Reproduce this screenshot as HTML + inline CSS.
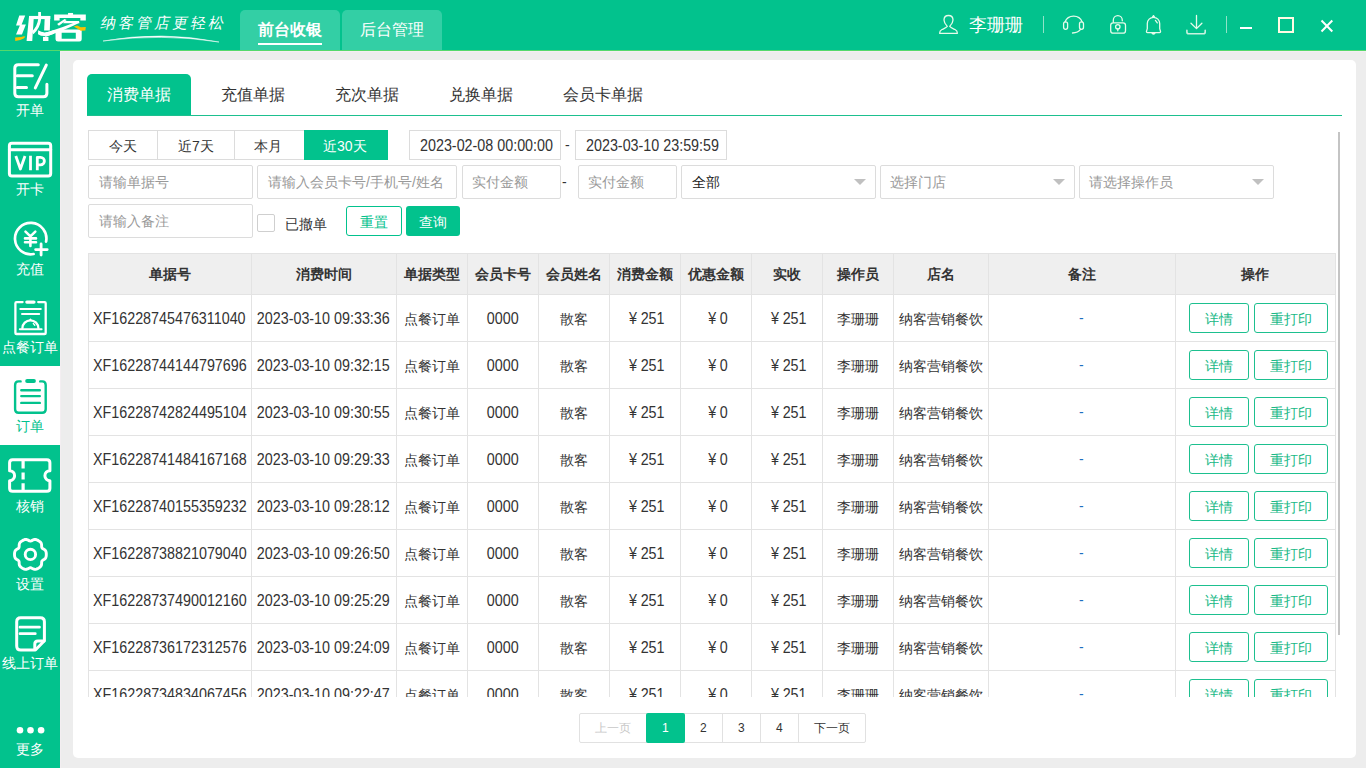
<!DOCTYPE html><html><head><meta charset="utf-8"><style>
*{box-sizing:border-box;margin:0;padding:0}
html,body{width:1366px;height:768px;overflow:hidden}
body{position:relative;background:#EDEDED;font-family:"Liberation Sans",sans-serif;color:#333;font-size:14px}
.a{position:absolute}
.t{position:absolute;white-space:nowrap;line-height:1}
.n{display:inline-block;font-size:16px;transform:scaleX(0.895);position:relative;top:-1px}
.nl{display:inline-block;font-size:16px;transform:scaleX(0.895);transform-origin:0 50%}
</style></head><body><div class="a" style="left:0;top:0;width:1366px;height:50px;background:#02C28D"></div><div class="a" style="left:0;top:50px;width:1366px;height:1px;background:#55D96C"></div><div class="a" style="left:60px;top:51px;width:1306px;height:1px;background:#F5EEF2"></div><div class="a" style="left:60px;top:51px;width:1px;height:717px;background:#F3EEF1"></div><div class="a" style="left:240px;top:10px;width:100px;height:40px;background:#33CFA5;border-radius:5px 5px 0 0"></div><div class="a" style="left:342px;top:10px;width:100px;height:40px;background:#33CFA5;border-radius:5px 5px 0 0"></div><div class="t" style="left:258px;top:22px;font-size:16px;color:#fff;font-weight:bold">前台收银</div><div class="a" style="left:258px;top:43px;width:64px;height:2px;background:#fff"></div><div class="t" style="left:360px;top:22px;font-size:16px;color:#fff">后台管理</div><svg class="a" style="left:0;top:0" width="95" height="50"><g fill="#fff" fill-rule="evenodd"><path d="M 19.29 15.47 L 25.21 15.47 L 21.66 24.49 L 25.90 24.49 L 21.93 34.60 L 16.01 34.60 L 19.84 25.40 L 16.01 25.40 Z"/><path d="M 29.08 15.92 L 33.87 15.92 L 32.27 40.98 L 26.58 40.98 Z"/><path d="M 29.08 15.92 L 50.27 15.92 L 50.27 19.11 L 29.08 19.11 Z"/><path d="M 38.20 12.05 L 40.93 12.05 L 41.16 19.11 L 38.20 19.11 Z"/><path d="M 38.20 18.88 L 41.16 18.88 Q 40.47 27.31 33.41 34.37 L 31.82 31.41 Q 37.51 25.95 38.20 18.88 Z"/><path d="M 44.80 15.92 L 50.27 15.92 L 49.81 30.50 L 44.12 30.50 Z"/><path d="M 38.20 30.27 Q 43.89 34.60 53.91 30.05 L 53.91 33.69 Q 43.89 38.25 37.97 34.15 Z"/><path d="M 42.98 36.88 L 48.45 36.88 L 48.45 40.98 L 42.98 40.98 Z"/><path d="M 68.05 12.96 L 73.06 12.96 L 73.06 15.01 L 68.05 15.01 Z"/><path d="M 54.15 14.56 L 85.81 14.56 L 85.81 20.48 L 80.35 20.48 L 80.35 17.97 L 59.62 17.97 L 59.62 20.48 L 54.15 20.48 Z"/><path d="M 57.11 24.12 L 64.63 18.88 L 66.68 20.02 L 58.93 25.72 Z"/><path d="M 64.63 20.93 L 78.98 20.93 L 79.44 23.21 L 63.03 23.21 Z"/><path d="M 76.70 21.62 L 79.44 22.76 Q 66.22 29.59 45.27 36.88 L 45.27 32.78 Q 63.95 27.31 76.70 21.62 Z"/><path d="M 55.52 31.87 L 61.67 29.59 L 81.71 29.59 L 81.71 39.16 Q 81.71 41.44 79.44 41.44 L 58.02 41.44 Q 55.52 41.44 55.52 39.16 Z M 61.67 32.78 L 75.79 32.78 L 75.79 38.70 L 61.67 38.70 Z"/></g><path fill="#FBC000" d="M 15.10 37.56 L 21.11 36.88 Q 24.98 35.88 25.44 36.79 Q 24.53 38.47 20.20 40.07 L 15.28 41.07 Z M 73.74 26.40 L 77.16 25.49 L 80.80 27.31 L 85.81 27.08 L 85.36 30.50 L 80.80 30.73 L 77.16 28.45 Z"/></svg><div class="t" style="left:101px;top:15px;font-size:15px;color:#fff;font-weight:300;letter-spacing:3px;transform:skewX(-12deg)">纳客管店更轻松</div><svg class="a" style="left:0;top:0" width="240" height="50"><path d="M103,41 Q162,30.5 219,42 Q162,33.2 103,41 Z" fill="#fff" stroke="#fff" stroke-width="0.5"/></svg><div class="t" style="left:969px;top:16px;font-size:18px;color:#fff;font-weight:500">李珊珊</div><svg class="a" style="left:0;top:0" width="1366" height="50"><path stroke="#E6FBEA" stroke-width="1.3" fill="none" stroke-linecap="round" stroke-linejoin="round" d="M947.3,26.4 C945,24 944,22 944,20 C944,17 946,15.5 948.5,15.5 C951,15.5 953,17 953,20 C953,22 952,24 949.7,26.4 C951,28 953,28.5 955,29.5 C957,30.5 957.4,32 957.4,33.3 H939.6 C939.6,32 940,30.5 942,29.5 C944,28.5 946,28 947.3,26.4 Z"/><rect x="1043" y="16" width="1" height="17" fill="#8FE3C8"/><rect x="1226" y="16" width="1" height="17" fill="#8FE3C8"/><path stroke="#E6FBEA" stroke-width="1.3" fill="none" stroke-linecap="round" stroke-linejoin="round" d="M1065,22 A9.2,9.2 0 0 1 1082.2,22"/><rect stroke="#E6FBEA" stroke-width="1.3" fill="none" stroke-linecap="round" stroke-linejoin="round" x="1063.6" y="21.8" width="4" height="7.5" rx="2"/><rect stroke="#E6FBEA" stroke-width="1.3" fill="none" stroke-linecap="round" stroke-linejoin="round" x="1079.5" y="21.8" width="4" height="7.5" rx="2"/><path stroke="#E6FBEA" stroke-width="1.3" fill="none" stroke-linecap="round" stroke-linejoin="round" d="M1080.8,29.2 Q1078,33 1072.5,33"/><path stroke="#E6FBEA" stroke-width="1.3" fill="none" stroke-linecap="round" stroke-linejoin="round" d="M1113.3,22.3 V20.2 A4.5,4.5 0 0 1 1122.3,20.2 V20.8"/><rect stroke="#E6FBEA" stroke-width="1.3" fill="none" stroke-linecap="round" stroke-linejoin="round" x="1110.7" y="22.8" width="14.8" height="10.4" rx="2.5"/><circle stroke="#E6FBEA" stroke-width="1.3" fill="none" stroke-linecap="round" stroke-linejoin="round" cx="1117.8" cy="26.8" r="2.2"/><path stroke="#E6FBEA" stroke-width="1.3" fill="none" stroke-linecap="round" stroke-linejoin="round" d="M1117.8,29 V30.8"/><path stroke="#E6FBEA" stroke-width="1.3" fill="none" stroke-linecap="round" stroke-linejoin="round" d="M1153.5,15.6 L1152.4,17.2 H1154.6Z M1147.3,28.6 V23.5 A6.2,6.2 0 0 1 1159.7,23.5 V28.6 L1160.6,31.6 Q1160.6,32.6 1159.6,32.6 H1147.4 Q1146.4,32.6 1146.4,31.6 Z M1151.8,32.8 A1.8,1.8 0 0 0 1155.2,32.8 M1155.4,20.4 L1157.3,22.9"/><path stroke="#E6FBEA" stroke-width="1.3" fill="none" stroke-linecap="round" stroke-linejoin="round" d="M1196.5,15.5 V28.4 M1191,23.3 L1196.5,28.6 L1201.9,23.3"/><path stroke="#C9F2DF" stroke-width="1.6" fill="none" stroke-linecap="round" d="M1186.9,30.3 V32 Q1186.9,33.8 1188.8,33.8 H1203.3 Q1205.2,33.8 1205.2,32 V30.3"/><rect x="1240" y="27" width="12" height="2" fill="#fff"/><rect x="1279" y="18" width="14" height="14" fill="none" stroke="#FFFBE3" stroke-width="2"/><path d="M1321.5,20.5 L1332.3,31.5 M1332.3,20.5 L1321.5,31.5" stroke="#fff" stroke-width="2"/></svg><div class="a" style="left:0;top:51px;width:60px;height:717px;background:#02C28D"></div><div class="a" style="left:0;top:366px;width:60px;height:79px;background:#fff"></div><div class="t" style="left:-10px;width:80px;text-align:center;top:103px;font-size:14px;color:#fff">开单</div><div class="t" style="left:-10px;width:80px;text-align:center;top:182px;font-size:14px;color:#fff">开卡</div><div class="t" style="left:-10px;width:80px;text-align:center;top:262px;font-size:14px;color:#fff">充值</div><div class="t" style="left:-10px;width:80px;text-align:center;top:340px;font-size:14px;color:#fff">点餐订单</div><div class="t" style="left:-10px;width:80px;text-align:center;top:419px;font-size:14px;color:#02C28D">订单</div><div class="t" style="left:-10px;width:80px;text-align:center;top:499px;font-size:14px;color:#fff">核销</div><div class="t" style="left:-10px;width:80px;text-align:center;top:577px;font-size:14px;color:#fff">设置</div><div class="t" style="left:-10px;width:80px;text-align:center;top:656px;font-size:14px;color:#fff">线上订单</div><div class="t" style="left:-10px;width:80px;text-align:center;top:742px;font-size:14px;color:#fff">更多</div><svg class="a" style="left:0;top:0" width="60" height="768"><path stroke="#fff" fill="none" stroke-linecap="round" stroke-linejoin="round" stroke-width="3" d="M38.3,64.8 H18.3 Q14.8,64.8 14.8,68.3 V93.2 Q14.8,96.7 18.3,96.7 H43.4 Q46.9,96.7 46.9,93.2 V84.2"/><path stroke="#fff" fill="none" stroke-linecap="round" stroke-linejoin="round" stroke-width="3" d="M17.2,75.8 H32.3 M17.2,87.5 H26.5 M46.3,65.1 L35.3,87.9"/><rect stroke="#fff" fill="none" stroke-linecap="round" stroke-linejoin="round" stroke-width="3" x="9.4" y="143.3" width="41.3" height="32.8" rx="2.5"/><path stroke="#fff" fill="none" stroke-linecap="round" stroke-linejoin="round" stroke-width="3" d="M9.4,149.8 H50.7"/><path stroke="#fff" fill="none" stroke-width="2.8" stroke-linejoin="round" d="M15.8,156 L20.4,169 L25,156 M30.5,155.8 V170.2 M37.3,170.2 V157.3 H40.6 A3.8,3.8 0 0 1 40.6,164.9 H37.3"/><path stroke="#fff" fill="none" stroke-linecap="round" stroke-linejoin="round" stroke-width="2.7" d="M46.1,241.6 A15.7,15.7 0 1 0 33.6,254"/><path stroke="#fff" fill="none" stroke-linecap="round" stroke-linejoin="round" stroke-width="2.6" d="M25.5,231.6 L30.4,236.4 L35.3,231.6 M30.4,236.4 V245.9 M25,238.4 H36 M25,242.3 H36"/><path stroke="#fff" fill="none" stroke-linecap="round" stroke-linejoin="round" stroke-width="2.8" d="M41.1,244 V255 M35.6,249.6 H47.2"/><path stroke="#fff" fill="none" stroke-linecap="round" stroke-linejoin="round" stroke-width="2.3" d="M22.6,302.1 H16.5 Q15.4,302.1 15.4,303.2 V332.9 Q15.4,334 16.5,334 H44.6 Q45.7,334 45.7,332.9 V303.2 Q45.7,302.1 44.6,302.1 H38.2"/><rect x="25.2" y="300.4" width="10.4" height="3.4" rx="1.7" fill="#fff"/><path stroke="#fff" fill="none" stroke-linecap="round" stroke-linejoin="round" stroke-width="2" d="M20.3,309.1 H40.8 M22,314 H39.2 M19.8,329.2 H41.6"/><path stroke="#fff" fill="none" stroke-linecap="round" stroke-linejoin="round" stroke-width="2.3" d="M22.4,328.3 A8,8 0 0 1 38.4,328.3"/><path d="M30.4,318.2 L28.6,320.6 H32.2Z" fill="#fff"/><path stroke="#fff" fill="none" stroke-linecap="round" stroke-linejoin="round" stroke-width="1.3" d="M33.3,323.5 L34.8,325.2"/><path stroke="#02C28D" fill="none" stroke-linecap="round" stroke-linejoin="round" stroke-width="2.4" d="M20.6,381.4 H18.6 Q15.1,381.4 15.1,384.9 V409.2 Q15.1,412.7 18.6,412.7 H42.2 Q45.7,412.7 45.7,409.2 V384.9 Q45.7,381.4 42.2,381.4 H40.2"/><rect x="25.2" y="379.1" width="10.7" height="3.9" rx="1.9" fill="#02C28D"/><path stroke="#02C28D" stroke-linecap="round" stroke-width="2.4" d="M21.3,390.2 H39.8 M21.3,396.1 H39.8 M21.3,402.9 H39.8"/><path stroke="#fff" fill="none" stroke-linecap="round" stroke-linejoin="round" stroke-width="3" d="M12.6,459.8 H46.9 Q49.9,459.8 49.9,462.8 V470.7 A5,5 0 0 0 49.9,480.7 V488.3 Q49.9,491.3 46.9,491.3 H12.6 Q9.6,491.3 9.6,488.3 V480.7 A5,5 0 0 0 9.6,470.7 V462.8 Q9.6,459.8 12.6,459.8 Z"/><path stroke="#fff" stroke-width="3.2" d="M23.1,460 V468.6 M23.1,472.5 V479.6 M23.1,483.2 V491"/><path stroke="#fff" fill="none" stroke-linecap="round" stroke-linejoin="round" stroke-width="2.9" d="M46.30,554.40 L46.27,555.44 L46.14,556.47 L45.86,557.48 L45.31,558.40 L44.48,559.18 L43.47,559.81 L42.54,560.39 L41.92,561.05 L41.66,561.92 L41.63,563.01 L41.58,564.20 L41.32,565.32 L40.79,566.25 L40.07,567.00 L39.23,567.62 L38.35,568.17 L37.43,568.66 L36.48,569.07 L35.47,569.33 L34.40,569.31 L33.30,568.98 L32.25,568.43 L31.29,567.91 L30.40,567.70 L29.51,567.91 L28.55,568.43 L27.50,568.98 L26.40,569.31 L25.33,569.33 L24.32,569.07 L23.37,568.66 L22.45,568.17 L21.57,567.62 L20.73,567.00 L20.01,566.25 L19.48,565.32 L19.22,564.20 L19.17,563.01 L19.14,561.92 L18.88,561.05 L18.26,560.39 L17.33,559.81 L16.32,559.18 L15.49,558.40 L14.94,557.48 L14.66,556.47 L14.53,555.44 L14.50,554.40 L14.53,553.36 L14.66,552.33 L14.94,551.32 L15.49,550.40 L16.32,549.62 L17.33,548.99 L18.26,548.41 L18.88,547.75 L19.14,546.88 L19.17,545.79 L19.22,544.60 L19.48,543.48 L20.01,542.55 L20.73,541.80 L21.57,541.18 L22.45,540.63 L23.37,540.14 L24.32,539.73 L25.33,539.47 L26.40,539.49 L27.50,539.82 L28.55,540.37 L29.51,540.89 L30.40,541.10 L31.29,540.89 L32.25,540.37 L33.30,539.82 L34.40,539.49 L35.47,539.47 L36.48,539.73 L37.43,540.14 L38.35,540.63 L39.23,541.18 L40.07,541.80 L40.79,542.55 L41.32,543.48 L41.58,544.60 L41.63,545.79 L41.66,546.88 L41.92,547.75 L42.54,548.41 L43.47,548.99 L44.48,549.62 L45.31,550.40 L45.86,551.32 L46.14,552.33 L46.27,553.36 L46.30,554.40Z"/><circle stroke="#fff" fill="none" stroke-linecap="round" stroke-linejoin="round" stroke-width="2.9" cx="30.4" cy="554.4" r="5.2"/><path stroke="#fff" fill="none" stroke-linecap="round" stroke-linejoin="round" stroke-width="3" d="M20.7,617.8 H40.4 Q44.4,617.8 44.4,621.8 V640.8 L35.4,650 H20.7 Q16.7,650 16.7,646 V621.8 Q16.7,617.8 20.7,617.8 Z"/><path stroke="#fff" fill="none" stroke-linecap="round" stroke-linejoin="round" stroke-width="3" d="M34.8,649.5 V644 Q34.8,641 37.8,641 H44"/><path stroke="#fff" fill="none" stroke-linecap="round" stroke-linejoin="round" stroke-width="2.7" d="M20,627.2 H39.5 M20,633.7 H35.3"/><circle cx="20" cy="730.3" r="3.3" fill="#fff"/><circle cx="30.5" cy="730.3" r="3.3" fill="#fff"/><circle cx="41.1" cy="730.3" r="3.3" fill="#fff"/></svg><div class="a" style="left:73px;top:60px;width:1283px;height:698px;background:#fff;border-radius:5px"></div><div class="a" style="left:87px;top:74px;width:104px;height:41px;background:#02C28D;border-radius:5px 5px 0 0"></div><div class="a" style="left:87px;top:115px;width:1255px;height:1px;background:#1DC08F"></div><div class="t" style="left:107px;top:87px;font-size:16px;color:#fff">消费单据</div><div class="t" style="left:221px;top:87px;font-size:16px;color:#333">充值单据</div><div class="t" style="left:335px;top:87px;font-size:16px;color:#333">充次单据</div><div class="t" style="left:449px;top:87px;font-size:16px;color:#333">兑换单据</div><div class="t" style="left:563px;top:87px;font-size:16px;color:#333">会员卡单据</div><div class="a" style="left:88px;top:130px;width:300px;height:30px;border:1px solid #DCDCDC"></div><div class="a" style="left:157px;top:130px;width:1px;height:30px;background:#DCDCDC"></div><div class="a" style="left:234px;top:130px;width:1px;height:30px;background:#DCDCDC"></div><div class="a" style="left:304px;top:130px;width:84px;height:30px;background:#02C28D"></div><div class="t" style="left:109px;top:139px;font-size:14px;color:#333">今天</div><div class="t" style="left:178px;top:139px;font-size:14px;color:#333">近7天</div><div class="t" style="left:254px;top:139px;font-size:14px;color:#333">本月</div><div class="t" style="left:323px;top:139px;font-size:14px;color:#fff">近30天</div><div class="a" style="left:409px;top:130px;width:152px;height:30px;border:1px solid #DCDCDC;border-radius:0px"></div><div class="a" style="left:575px;top:130px;width:152px;height:30px;border:1px solid #DCDCDC;border-radius:0px"></div><div class="t" style="left:420px;top:138px;font-size:14px;color:#333"><span class="nl">2023-02-08 00:00:00</span></div><div class="t" style="left:586px;top:138px;font-size:14px;color:#333"><span class="nl">2023-03-10 23:59:59</span></div><div class="t" style="left:565px;top:138px;font-size:14px;color:#333">-</div><div class="a" style="left:88px;top:165px;width:165px;height:34px;border:1px solid #DCDCDC;border-radius:2px"></div><div class="a" style="left:257px;top:165px;width:200px;height:34px;border:1px solid #DCDCDC;border-radius:2px"></div><div class="a" style="left:462px;top:165px;width:99px;height:34px;border:1px solid #DCDCDC;border-radius:2px"></div><div class="a" style="left:578px;top:165px;width:99px;height:34px;border:1px solid #DCDCDC;border-radius:2px"></div><div class="a" style="left:681px;top:165px;width:195px;height:34px;border:1px solid #DCDCDC;border-radius:2px"></div><div class="a" style="left:880px;top:165px;width:195px;height:34px;border:1px solid #DCDCDC;border-radius:2px"></div><div class="a" style="left:1079px;top:165px;width:195px;height:34px;border:1px solid #DCDCDC;border-radius:2px"></div><div class="t" style="left:562px;top:175px;font-size:14px;color:#333">-</div><div class="t" style="left:99px;top:175px;font-size:14px;color:#999">请输单据号</div><div class="t" style="left:268px;top:175px;font-size:14px;color:#999">请输入会员卡号/手机号/姓名</div><div class="t" style="left:472px;top:175px;font-size:14px;color:#999">实付金额</div><div class="t" style="left:588px;top:175px;font-size:14px;color:#999">实付金额</div><div class="t" style="left:692px;top:175px;font-size:14px;color:#222">全部</div><div class="t" style="left:890px;top:175px;font-size:14px;color:#999">选择门店</div><div class="t" style="left:1089px;top:175px;font-size:14px;color:#999">请选择操作员</div><svg class="a" style="left:854px;top:179px" width="12" height="6"><path d="M0,0 H12 L6,6Z" fill="#C0C0C0"/></svg><svg class="a" style="left:1053px;top:179px" width="12" height="6"><path d="M0,0 H12 L6,6Z" fill="#C0C0C0"/></svg><svg class="a" style="left:1252px;top:179px" width="12" height="6"><path d="M0,0 H12 L6,6Z" fill="#C0C0C0"/></svg><div class="a" style="left:88px;top:204px;width:165px;height:34px;border:1px solid #DCDCDC;border-radius:2px"></div><div class="t" style="left:99px;top:214px;font-size:14px;color:#999">请输入备注</div><div class="a" style="left:257px;top:214px;width:18px;height:18px;border:1px solid #CFCFCF;border-radius:2px"></div><div class="t" style="left:285px;top:217px;font-size:14px;color:#333">已撤单</div><div class="a" style="left:346px;top:206px;width:56px;height:30px;border:1px solid #02C28D;border-radius:3px"></div><div class="t" style="left:360px;top:215px;font-size:14px;color:#02C28D;font-weight:500">重置</div><div class="a" style="left:406px;top:206px;width:54px;height:30px;background:#02C28D;border-radius:3px"></div><div class="t" style="left:419px;top:215px;font-size:14px;color:#fff;font-weight:500">查询</div><div class="a" style="left:88px;top:253px;width:1248px;height:444px;overflow:hidden"><div class="a" style="left:0;top:0;width:1248px;height:42px;background:#EFEFEF"></div><div class="a" style="left:0;top:0;width:1248px;height:1px;background:#E3E3E3"></div><div class="a" style="left:0px;top:0;width:1px;height:450px;background:#E3E3E3"></div><div class="a" style="left:163px;top:0;width:1px;height:450px;background:#E3E3E3"></div><div class="a" style="left:308px;top:0;width:1px;height:450px;background:#E3E3E3"></div><div class="a" style="left:379px;top:0;width:1px;height:450px;background:#E3E3E3"></div><div class="a" style="left:450px;top:0;width:1px;height:450px;background:#E3E3E3"></div><div class="a" style="left:521px;top:0;width:1px;height:450px;background:#E3E3E3"></div><div class="a" style="left:592px;top:0;width:1px;height:450px;background:#E3E3E3"></div><div class="a" style="left:663px;top:0;width:1px;height:450px;background:#E3E3E3"></div><div class="a" style="left:734px;top:0;width:1px;height:450px;background:#E3E3E3"></div><div class="a" style="left:805px;top:0;width:1px;height:450px;background:#E3E3E3"></div><div class="a" style="left:900px;top:0;width:1px;height:450px;background:#E3E3E3"></div><div class="a" style="left:1087px;top:0;width:1px;height:450px;background:#E3E3E3"></div><div class="a" style="left:1247px;top:0;width:1px;height:450px;background:#E3E3E3"></div><div class="a" style="left:0;top:41px;width:1248px;height:1px;background:#E3E3E3"></div><div class="a" style="left:0;top:88px;width:1248px;height:1px;background:#E3E3E3"></div><div class="a" style="left:0;top:135px;width:1248px;height:1px;background:#E3E3E3"></div><div class="a" style="left:0;top:182px;width:1248px;height:1px;background:#E3E3E3"></div><div class="a" style="left:0;top:229px;width:1248px;height:1px;background:#E3E3E3"></div><div class="a" style="left:0;top:276px;width:1248px;height:1px;background:#E3E3E3"></div><div class="a" style="left:0;top:323px;width:1248px;height:1px;background:#E3E3E3"></div><div class="a" style="left:0;top:370px;width:1248px;height:1px;background:#E3E3E3"></div><div class="a" style="left:0;top:417px;width:1248px;height:1px;background:#E3E3E3"></div><div class="a" style="left:0;top:464px;width:1248px;height:1px;background:#E3E3E3"></div><div class="t" style="left:0px;width:163px;text-align:center;top:14px;font-size:14px;font-weight:bold;color:#333">单据号</div><div class="t" style="left:163px;width:145px;text-align:center;top:14px;font-size:14px;font-weight:bold;color:#333">消费时间</div><div class="t" style="left:308px;width:71px;text-align:center;top:14px;font-size:14px;font-weight:bold;color:#333">单据类型</div><div class="t" style="left:379px;width:71px;text-align:center;top:14px;font-size:14px;font-weight:bold;color:#333">会员卡号</div><div class="t" style="left:450px;width:71px;text-align:center;top:14px;font-size:14px;font-weight:bold;color:#333">会员姓名</div><div class="t" style="left:521px;width:71px;text-align:center;top:14px;font-size:14px;font-weight:bold;color:#333">消费金额</div><div class="t" style="left:592px;width:71px;text-align:center;top:14px;font-size:14px;font-weight:bold;color:#333">优惠金额</div><div class="t" style="left:663px;width:71px;text-align:center;top:14px;font-size:14px;font-weight:bold;color:#333">实收</div><div class="t" style="left:734px;width:71px;text-align:center;top:14px;font-size:14px;font-weight:bold;color:#333">操作员</div><div class="t" style="left:805px;width:95px;text-align:center;top:14px;font-size:14px;font-weight:bold;color:#333">店名</div><div class="t" style="left:900px;width:187px;text-align:center;top:14px;font-size:14px;font-weight:bold;color:#333">备注</div><div class="t" style="left:1087px;width:160px;text-align:center;top:14px;font-size:14px;font-weight:bold;color:#333">操作</div><div class="t" style="left:-30px;width:223px;text-align:center;top:59px;font-size:14px;color:#333"><span class="n">XF16228745476311040</span></div><div class="t" style="left:133px;width:205px;text-align:center;top:59px;font-size:14px;color:#333"><span class="n">2023-03-10 09:33:36</span></div><div class="t" style="left:278px;width:131px;text-align:center;top:59px;font-size:14px;color:#333">点餐订单</div><div class="t" style="left:349px;width:131px;text-align:center;top:59px;font-size:14px;color:#333"><span class="n">0000</span></div><div class="t" style="left:420px;width:131px;text-align:center;top:59px;font-size:14px;color:#333">散客</div><div class="t" style="left:491px;width:131px;text-align:center;top:59px;font-size:14px;color:#333"><span class="n" style="position:relative;left:2px">¥<span style="margin-left:4px">251</span></span></div><div class="t" style="left:562px;width:131px;text-align:center;top:59px;font-size:14px;color:#333"><span class="n" style="position:relative;left:2px">¥<span style="margin-left:4px">0</span></span></div><div class="t" style="left:633px;width:131px;text-align:center;top:59px;font-size:14px;color:#333"><span class="n" style="position:relative;left:2px">¥<span style="margin-left:4px">251</span></span></div><div class="t" style="left:704px;width:131px;text-align:center;top:59px;font-size:14px;color:#333">李珊珊</div><div class="t" style="left:775px;width:155px;text-align:center;top:59px;font-size:14px;color:#333">纳客营销餐饮</div><div class="t" style="left:991px;top:58px;font-size:14px;color:#1E6FC0">-</div><div class="a" style="left:1101px;top:50px;width:60px;height:30px;border:1px solid #1DC08F;border-radius:3px"></div><div class="a" style="left:1166px;top:50px;width:74px;height:30px;border:1px solid #1DC08F;border-radius:3px"></div><div class="t" style="left:1117px;top:59px;font-size:14px;color:#19B987">详情</div><div class="t" style="left:1182px;top:59px;font-size:14px;color:#19B987">重打印</div><div class="t" style="left:-30px;width:223px;text-align:center;top:106px;font-size:14px;color:#333"><span class="n">XF16228744144797696</span></div><div class="t" style="left:133px;width:205px;text-align:center;top:106px;font-size:14px;color:#333"><span class="n">2023-03-10 09:32:15</span></div><div class="t" style="left:278px;width:131px;text-align:center;top:106px;font-size:14px;color:#333">点餐订单</div><div class="t" style="left:349px;width:131px;text-align:center;top:106px;font-size:14px;color:#333"><span class="n">0000</span></div><div class="t" style="left:420px;width:131px;text-align:center;top:106px;font-size:14px;color:#333">散客</div><div class="t" style="left:491px;width:131px;text-align:center;top:106px;font-size:14px;color:#333"><span class="n" style="position:relative;left:2px">¥<span style="margin-left:4px">251</span></span></div><div class="t" style="left:562px;width:131px;text-align:center;top:106px;font-size:14px;color:#333"><span class="n" style="position:relative;left:2px">¥<span style="margin-left:4px">0</span></span></div><div class="t" style="left:633px;width:131px;text-align:center;top:106px;font-size:14px;color:#333"><span class="n" style="position:relative;left:2px">¥<span style="margin-left:4px">251</span></span></div><div class="t" style="left:704px;width:131px;text-align:center;top:106px;font-size:14px;color:#333">李珊珊</div><div class="t" style="left:775px;width:155px;text-align:center;top:106px;font-size:14px;color:#333">纳客营销餐饮</div><div class="t" style="left:991px;top:105px;font-size:14px;color:#1E6FC0">-</div><div class="a" style="left:1101px;top:97px;width:60px;height:30px;border:1px solid #1DC08F;border-radius:3px"></div><div class="a" style="left:1166px;top:97px;width:74px;height:30px;border:1px solid #1DC08F;border-radius:3px"></div><div class="t" style="left:1117px;top:106px;font-size:14px;color:#19B987">详情</div><div class="t" style="left:1182px;top:106px;font-size:14px;color:#19B987">重打印</div><div class="t" style="left:-30px;width:223px;text-align:center;top:153px;font-size:14px;color:#333"><span class="n">XF16228742824495104</span></div><div class="t" style="left:133px;width:205px;text-align:center;top:153px;font-size:14px;color:#333"><span class="n">2023-03-10 09:30:55</span></div><div class="t" style="left:278px;width:131px;text-align:center;top:153px;font-size:14px;color:#333">点餐订单</div><div class="t" style="left:349px;width:131px;text-align:center;top:153px;font-size:14px;color:#333"><span class="n">0000</span></div><div class="t" style="left:420px;width:131px;text-align:center;top:153px;font-size:14px;color:#333">散客</div><div class="t" style="left:491px;width:131px;text-align:center;top:153px;font-size:14px;color:#333"><span class="n" style="position:relative;left:2px">¥<span style="margin-left:4px">251</span></span></div><div class="t" style="left:562px;width:131px;text-align:center;top:153px;font-size:14px;color:#333"><span class="n" style="position:relative;left:2px">¥<span style="margin-left:4px">0</span></span></div><div class="t" style="left:633px;width:131px;text-align:center;top:153px;font-size:14px;color:#333"><span class="n" style="position:relative;left:2px">¥<span style="margin-left:4px">251</span></span></div><div class="t" style="left:704px;width:131px;text-align:center;top:153px;font-size:14px;color:#333">李珊珊</div><div class="t" style="left:775px;width:155px;text-align:center;top:153px;font-size:14px;color:#333">纳客营销餐饮</div><div class="t" style="left:991px;top:152px;font-size:14px;color:#1E6FC0">-</div><div class="a" style="left:1101px;top:144px;width:60px;height:30px;border:1px solid #1DC08F;border-radius:3px"></div><div class="a" style="left:1166px;top:144px;width:74px;height:30px;border:1px solid #1DC08F;border-radius:3px"></div><div class="t" style="left:1117px;top:153px;font-size:14px;color:#19B987">详情</div><div class="t" style="left:1182px;top:153px;font-size:14px;color:#19B987">重打印</div><div class="t" style="left:-30px;width:223px;text-align:center;top:200px;font-size:14px;color:#333"><span class="n">XF16228741484167168</span></div><div class="t" style="left:133px;width:205px;text-align:center;top:200px;font-size:14px;color:#333"><span class="n">2023-03-10 09:29:33</span></div><div class="t" style="left:278px;width:131px;text-align:center;top:200px;font-size:14px;color:#333">点餐订单</div><div class="t" style="left:349px;width:131px;text-align:center;top:200px;font-size:14px;color:#333"><span class="n">0000</span></div><div class="t" style="left:420px;width:131px;text-align:center;top:200px;font-size:14px;color:#333">散客</div><div class="t" style="left:491px;width:131px;text-align:center;top:200px;font-size:14px;color:#333"><span class="n" style="position:relative;left:2px">¥<span style="margin-left:4px">251</span></span></div><div class="t" style="left:562px;width:131px;text-align:center;top:200px;font-size:14px;color:#333"><span class="n" style="position:relative;left:2px">¥<span style="margin-left:4px">0</span></span></div><div class="t" style="left:633px;width:131px;text-align:center;top:200px;font-size:14px;color:#333"><span class="n" style="position:relative;left:2px">¥<span style="margin-left:4px">251</span></span></div><div class="t" style="left:704px;width:131px;text-align:center;top:200px;font-size:14px;color:#333">李珊珊</div><div class="t" style="left:775px;width:155px;text-align:center;top:200px;font-size:14px;color:#333">纳客营销餐饮</div><div class="t" style="left:991px;top:199px;font-size:14px;color:#1E6FC0">-</div><div class="a" style="left:1101px;top:191px;width:60px;height:30px;border:1px solid #1DC08F;border-radius:3px"></div><div class="a" style="left:1166px;top:191px;width:74px;height:30px;border:1px solid #1DC08F;border-radius:3px"></div><div class="t" style="left:1117px;top:200px;font-size:14px;color:#19B987">详情</div><div class="t" style="left:1182px;top:200px;font-size:14px;color:#19B987">重打印</div><div class="t" style="left:-30px;width:223px;text-align:center;top:247px;font-size:14px;color:#333"><span class="n">XF16228740155359232</span></div><div class="t" style="left:133px;width:205px;text-align:center;top:247px;font-size:14px;color:#333"><span class="n">2023-03-10 09:28:12</span></div><div class="t" style="left:278px;width:131px;text-align:center;top:247px;font-size:14px;color:#333">点餐订单</div><div class="t" style="left:349px;width:131px;text-align:center;top:247px;font-size:14px;color:#333"><span class="n">0000</span></div><div class="t" style="left:420px;width:131px;text-align:center;top:247px;font-size:14px;color:#333">散客</div><div class="t" style="left:491px;width:131px;text-align:center;top:247px;font-size:14px;color:#333"><span class="n" style="position:relative;left:2px">¥<span style="margin-left:4px">251</span></span></div><div class="t" style="left:562px;width:131px;text-align:center;top:247px;font-size:14px;color:#333"><span class="n" style="position:relative;left:2px">¥<span style="margin-left:4px">0</span></span></div><div class="t" style="left:633px;width:131px;text-align:center;top:247px;font-size:14px;color:#333"><span class="n" style="position:relative;left:2px">¥<span style="margin-left:4px">251</span></span></div><div class="t" style="left:704px;width:131px;text-align:center;top:247px;font-size:14px;color:#333">李珊珊</div><div class="t" style="left:775px;width:155px;text-align:center;top:247px;font-size:14px;color:#333">纳客营销餐饮</div><div class="t" style="left:991px;top:246px;font-size:14px;color:#1E6FC0">-</div><div class="a" style="left:1101px;top:238px;width:60px;height:30px;border:1px solid #1DC08F;border-radius:3px"></div><div class="a" style="left:1166px;top:238px;width:74px;height:30px;border:1px solid #1DC08F;border-radius:3px"></div><div class="t" style="left:1117px;top:247px;font-size:14px;color:#19B987">详情</div><div class="t" style="left:1182px;top:247px;font-size:14px;color:#19B987">重打印</div><div class="t" style="left:-30px;width:223px;text-align:center;top:294px;font-size:14px;color:#333"><span class="n">XF16228738821079040</span></div><div class="t" style="left:133px;width:205px;text-align:center;top:294px;font-size:14px;color:#333"><span class="n">2023-03-10 09:26:50</span></div><div class="t" style="left:278px;width:131px;text-align:center;top:294px;font-size:14px;color:#333">点餐订单</div><div class="t" style="left:349px;width:131px;text-align:center;top:294px;font-size:14px;color:#333"><span class="n">0000</span></div><div class="t" style="left:420px;width:131px;text-align:center;top:294px;font-size:14px;color:#333">散客</div><div class="t" style="left:491px;width:131px;text-align:center;top:294px;font-size:14px;color:#333"><span class="n" style="position:relative;left:2px">¥<span style="margin-left:4px">251</span></span></div><div class="t" style="left:562px;width:131px;text-align:center;top:294px;font-size:14px;color:#333"><span class="n" style="position:relative;left:2px">¥<span style="margin-left:4px">0</span></span></div><div class="t" style="left:633px;width:131px;text-align:center;top:294px;font-size:14px;color:#333"><span class="n" style="position:relative;left:2px">¥<span style="margin-left:4px">251</span></span></div><div class="t" style="left:704px;width:131px;text-align:center;top:294px;font-size:14px;color:#333">李珊珊</div><div class="t" style="left:775px;width:155px;text-align:center;top:294px;font-size:14px;color:#333">纳客营销餐饮</div><div class="t" style="left:991px;top:293px;font-size:14px;color:#1E6FC0">-</div><div class="a" style="left:1101px;top:285px;width:60px;height:30px;border:1px solid #1DC08F;border-radius:3px"></div><div class="a" style="left:1166px;top:285px;width:74px;height:30px;border:1px solid #1DC08F;border-radius:3px"></div><div class="t" style="left:1117px;top:294px;font-size:14px;color:#19B987">详情</div><div class="t" style="left:1182px;top:294px;font-size:14px;color:#19B987">重打印</div><div class="t" style="left:-30px;width:223px;text-align:center;top:341px;font-size:14px;color:#333"><span class="n">XF16228737490012160</span></div><div class="t" style="left:133px;width:205px;text-align:center;top:341px;font-size:14px;color:#333"><span class="n">2023-03-10 09:25:29</span></div><div class="t" style="left:278px;width:131px;text-align:center;top:341px;font-size:14px;color:#333">点餐订单</div><div class="t" style="left:349px;width:131px;text-align:center;top:341px;font-size:14px;color:#333"><span class="n">0000</span></div><div class="t" style="left:420px;width:131px;text-align:center;top:341px;font-size:14px;color:#333">散客</div><div class="t" style="left:491px;width:131px;text-align:center;top:341px;font-size:14px;color:#333"><span class="n" style="position:relative;left:2px">¥<span style="margin-left:4px">251</span></span></div><div class="t" style="left:562px;width:131px;text-align:center;top:341px;font-size:14px;color:#333"><span class="n" style="position:relative;left:2px">¥<span style="margin-left:4px">0</span></span></div><div class="t" style="left:633px;width:131px;text-align:center;top:341px;font-size:14px;color:#333"><span class="n" style="position:relative;left:2px">¥<span style="margin-left:4px">251</span></span></div><div class="t" style="left:704px;width:131px;text-align:center;top:341px;font-size:14px;color:#333">李珊珊</div><div class="t" style="left:775px;width:155px;text-align:center;top:341px;font-size:14px;color:#333">纳客营销餐饮</div><div class="t" style="left:991px;top:340px;font-size:14px;color:#1E6FC0">-</div><div class="a" style="left:1101px;top:332px;width:60px;height:30px;border:1px solid #1DC08F;border-radius:3px"></div><div class="a" style="left:1166px;top:332px;width:74px;height:30px;border:1px solid #1DC08F;border-radius:3px"></div><div class="t" style="left:1117px;top:341px;font-size:14px;color:#19B987">详情</div><div class="t" style="left:1182px;top:341px;font-size:14px;color:#19B987">重打印</div><div class="t" style="left:-30px;width:223px;text-align:center;top:388px;font-size:14px;color:#333"><span class="n">XF16228736172312576</span></div><div class="t" style="left:133px;width:205px;text-align:center;top:388px;font-size:14px;color:#333"><span class="n">2023-03-10 09:24:09</span></div><div class="t" style="left:278px;width:131px;text-align:center;top:388px;font-size:14px;color:#333">点餐订单</div><div class="t" style="left:349px;width:131px;text-align:center;top:388px;font-size:14px;color:#333"><span class="n">0000</span></div><div class="t" style="left:420px;width:131px;text-align:center;top:388px;font-size:14px;color:#333">散客</div><div class="t" style="left:491px;width:131px;text-align:center;top:388px;font-size:14px;color:#333"><span class="n" style="position:relative;left:2px">¥<span style="margin-left:4px">251</span></span></div><div class="t" style="left:562px;width:131px;text-align:center;top:388px;font-size:14px;color:#333"><span class="n" style="position:relative;left:2px">¥<span style="margin-left:4px">0</span></span></div><div class="t" style="left:633px;width:131px;text-align:center;top:388px;font-size:14px;color:#333"><span class="n" style="position:relative;left:2px">¥<span style="margin-left:4px">251</span></span></div><div class="t" style="left:704px;width:131px;text-align:center;top:388px;font-size:14px;color:#333">李珊珊</div><div class="t" style="left:775px;width:155px;text-align:center;top:388px;font-size:14px;color:#333">纳客营销餐饮</div><div class="t" style="left:991px;top:387px;font-size:14px;color:#1E6FC0">-</div><div class="a" style="left:1101px;top:379px;width:60px;height:30px;border:1px solid #1DC08F;border-radius:3px"></div><div class="a" style="left:1166px;top:379px;width:74px;height:30px;border:1px solid #1DC08F;border-radius:3px"></div><div class="t" style="left:1117px;top:388px;font-size:14px;color:#19B987">详情</div><div class="t" style="left:1182px;top:388px;font-size:14px;color:#19B987">重打印</div><div class="t" style="left:-30px;width:223px;text-align:center;top:435px;font-size:14px;color:#333"><span class="n">XF16228734834067456</span></div><div class="t" style="left:133px;width:205px;text-align:center;top:435px;font-size:14px;color:#333"><span class="n">2023-03-10 09:22:47</span></div><div class="t" style="left:278px;width:131px;text-align:center;top:435px;font-size:14px;color:#333">点餐订单</div><div class="t" style="left:349px;width:131px;text-align:center;top:435px;font-size:14px;color:#333"><span class="n">0000</span></div><div class="t" style="left:420px;width:131px;text-align:center;top:435px;font-size:14px;color:#333">散客</div><div class="t" style="left:491px;width:131px;text-align:center;top:435px;font-size:14px;color:#333"><span class="n" style="position:relative;left:2px">¥<span style="margin-left:4px">251</span></span></div><div class="t" style="left:562px;width:131px;text-align:center;top:435px;font-size:14px;color:#333"><span class="n" style="position:relative;left:2px">¥<span style="margin-left:4px">0</span></span></div><div class="t" style="left:633px;width:131px;text-align:center;top:435px;font-size:14px;color:#333"><span class="n" style="position:relative;left:2px">¥<span style="margin-left:4px">251</span></span></div><div class="t" style="left:704px;width:131px;text-align:center;top:435px;font-size:14px;color:#333">李珊珊</div><div class="t" style="left:775px;width:155px;text-align:center;top:435px;font-size:14px;color:#333">纳客营销餐饮</div><div class="t" style="left:991px;top:434px;font-size:14px;color:#1E6FC0">-</div><div class="a" style="left:1101px;top:426px;width:60px;height:30px;border:1px solid #1DC08F;border-radius:3px"></div><div class="a" style="left:1166px;top:426px;width:74px;height:30px;border:1px solid #1DC08F;border-radius:3px"></div><div class="t" style="left:1117px;top:435px;font-size:14px;color:#19B987">详情</div><div class="t" style="left:1182px;top:435px;font-size:14px;color:#19B987">重打印</div></div><div class="a" style="left:1338px;top:132px;width:2px;height:503px;background:#C4C4C4"></div><div class="a" style="left:579px;top:713px;width:287px;height:30px;border:1px solid #E1E1E1;border-radius:2px"></div><div class="a" style="left:646px;top:713px;width:1px;height:30px;background:#E1E1E1"></div><div class="a" style="left:722px;top:713px;width:1px;height:30px;background:#E1E1E1"></div><div class="a" style="left:760px;top:713px;width:1px;height:30px;background:#E1E1E1"></div><div class="a" style="left:798px;top:713px;width:1px;height:30px;background:#E1E1E1"></div><div class="a" style="left:646px;top:713px;width:39px;height:30px;background:#02C28D;border-radius:2px"></div><div class="t" style="left:595px;top:722px;font-size:12px;color:#C8C8C8">上一页</div><div class="t" style="left:662px;top:722px;font-size:12px;color:#fff">1</div><div class="t" style="left:700px;top:722px;font-size:12px;color:#333">2</div><div class="t" style="left:738px;top:722px;font-size:12px;color:#333">3</div><div class="t" style="left:776px;top:722px;font-size:12px;color:#333">4</div><div class="t" style="left:814px;top:722px;font-size:12px;color:#333">下一页</div></body></html>
